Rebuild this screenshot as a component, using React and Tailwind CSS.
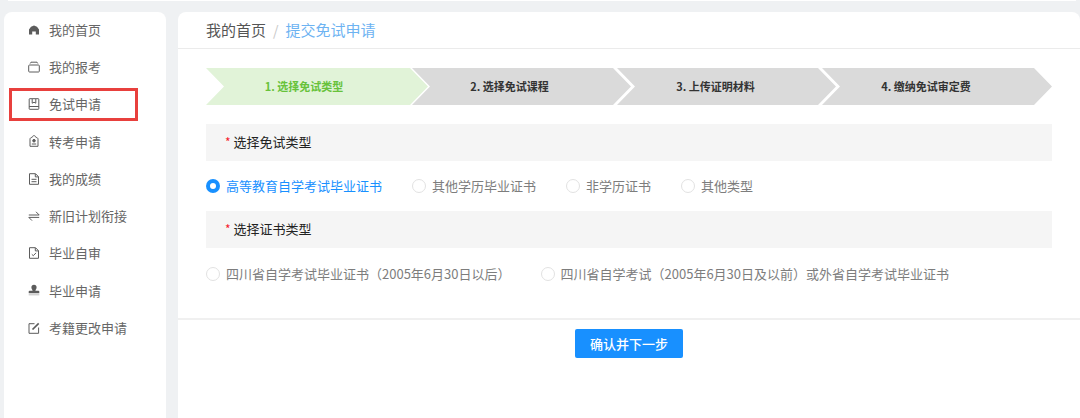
import React from "react";

const font = { fontFamily: '"Noto Sans CJK SC", "Noto Sans", sans-serif' };

// sidebar icons, drawn on a 12 box
const icons = {
  home: <path d="M6 1.500 3 2.700 1 5.500V10.500h3.200V7.500h3.600v3H11V5.500L9 2.700z" fill="currentColor" />,
  box: (
    <g fill="none" stroke="currentColor" strokeWidth="1">
      <rect x="0.700" y="4" width="10.600" height="7" rx="0.800" />
      <path d="M2.200 2.500 3 1.200h6l.8 1.300" />
    </g>
  ),
  form: (
    <g fill="none" stroke="currentColor" strokeWidth="1">
      <rect x="1.200" y="0.700" width="9.600" height="10.600" rx="0.500" />
      <path d="M4.200 1v4.200L6 4.200l1.800 1V1M1.200 8.500h9.600" />
    </g>
  ),
  badge: (
    <g fill="none" stroke="currentColor" strokeWidth="1">
      <path d="M2 4.200C2 3 3 2.500 4 2.500 4.300 1.300 5 .7 6 .7s1.700.6 2 1.800c1 0 2 .5 2 1.700v7.100H2z" />
      <circle cx="6" cy="5.700" r="1.300" fill="currentColor" />
      <path d="M3.800 9h4.400" />
    </g>
  ),
  file: (
    <g fill="none" stroke="currentColor" strokeWidth="1">
      <path d="M1.500.7h6L10.500 3.700v7.600h-9z" />
      <path d="M7.300 .9v3h3M3.500 6.300h5M3.500 8.700h5" />
    </g>
  ),
  swap: (
    <g fill="none" stroke="currentColor" strokeWidth="1">
      <path d="M.8 5h10.400L8 1.800M11.200 7.400H.8L4 10.600" />
    </g>
  ),
  check: (
    <g fill="none" stroke="currentColor" strokeWidth="1">
      <path d="M1.500.7h6L10.500 3.700v7.600h-9z" />
      <path d="M7.300.9v3h3M3.800 7.300l1.500 1.400 2.700-2.800" />
    </g>
  ),
  stamp: (
    <g fill="currentColor">
      <path d="M6 .8a2.600 2.600 0 0 1 2.600 2.600c0 1.400-1.100 2-1.200 3.300h3c.5 0 .9.400.9.900V9.300H.7V7.600c0-.5.4-.9.900-.9h3C4.500 5.400 3.400 4.800 3.400 3.400A2.600 2.600 0 0 1 6 .8z" />
      <rect x="0.700" y="10.300" width="10.600" height="1" opacity="0.4" />
    </g>
  ),
  edit: (
    <g fill="none" stroke="currentColor">
      <path d="M6.500 1.700H1v9.600h9.600V5.500" strokeWidth="1" />
      <path d="M4.500 7.500 10.700 1.300" strokeWidth="1.700" />
    </g>
  ),
};

const menu = [
  ["home", "我的首页"],
  ["box", "我的报考"],
  ["form", "免试申请"],
  ["badge", "转考申请"],
  ["file", "我的成绩"],
  ["swap", "新旧计划衔接"],
  ["check", "毕业自审"],
  ["stamp", "毕业申请"],
  ["edit", "考籍更改申请"],
];

function Radio({ label, checked }) {
  return (
    <div className="flex items-center">
      {checked ? (
        <span className="w-[14px] h-[14px] rounded-full bg-[#1890ff] flex items-center justify-center">
          <span className="w-[6px] h-[6px] rounded-full bg-white" />
        </span>
      ) : (
        <span className="w-[14px] h-[14px] rounded-full border border-[#e2e2e2] bg-white" />
      )}
      <span className={`ml-[6px] text-[13px] leading-5 whitespace-pre ${checked ? "text-[#1890ff]" : "text-[#7d7d7d]"}`}>{label}</span>
    </div>
  );
}

function SectionTitle({ children }) {
  return (
    <div className="h-[37px] bg-[#f5f5f5] flex items-center pl-[19px] pb-[2px] text-[13px] text-[#222]">
      <span className="text-[#f5222d] mr-[3px] text-[12px]">*</span>
      {children}
    </div>
  );
}

export default function App() {
  return (
    <div style={font} className="h-[418px] overflow-hidden bg-[#eff1f3]">
      <div className="h-px ml-2 mr-1 bg-white" />
      <div className="flex h-[417px] pt-[11px] pl-1 gap-3">
        <aside className="relative w-[162px] bg-white rounded-t-lg">
          {menu.map(([icon, name]) => (
            <div key={name} className="h-[37.25px] flex items-center pl-6 pb-[2px] text-[13px] text-[#666]">
              <svg width="12" height="12" viewBox="0 0 12 12" className="text-[#5c5c5c]">
                {icons[icon]}
              </svg>
              <span className="ml-[9px]">{name}</span>
            </div>
          ))}
          <div className="absolute left-[5px] top-[76px] w-[129px] h-[33px] border-[3px] border-[#e8403d]" />
        </aside>

        <main className="flex-1 bg-white rounded-t-lg">
          <div className="h-[37px] border-b border-[#ebebeb] flex items-center pl-7 text-[15px]">
            <span className="text-[#555]">我的首页</span>
            <span className="mx-[7px] text-[#c8c8c8] text-[14px]">/</span>
            <span className="text-[#6db3f2]">提交免试申请</span>
          </div>

          <div className="px-7 pt-[19px]">
            <div className="flex text-[11px] font-bold text-[#333]">
              <div className="w-[222px] h-[37px] flex items-center justify-center pr-[26px] bg-[#e1f3d8] text-[#67c23a] [clip-path:polygon(0_0,calc(100%-18px)_0,100%_50%,calc(100%-18px)_100%,0_100%,18px_50%)]">
                1. 选择免试类型
              </div>
              <div className="w-[219px] -ml-4 h-[37px] flex items-center justify-center pr-[24px] bg-[#dadada] [clip-path:polygon(0_0,calc(100%-18px)_0,100%_50%,calc(100%-18px)_100%,0_100%,18px_50%)]">
                2. 选择免试课程
              </div>
              <div className="w-[219px] -ml-[14px] h-[37px] flex items-center justify-center pr-[22px] bg-[#dadada] [clip-path:polygon(0_0,calc(100%-18px)_0,100%_50%,calc(100%-18px)_100%,0_100%,18px_50%)]">
                3. 上传证明材料
              </div>
              <div className="w-[230px] -ml-[14px] h-[37px] flex items-center justify-center pr-[22px] bg-[#dadada] [clip-path:polygon(0_0,calc(100%-18px)_0,100%_50%,calc(100%-18px)_100%,0_100%,18px_50%)]">
                4. 缴纳免试审定费
              </div>
            </div>

            <div className="w-[846px] mt-[19px]">
              <SectionTitle>选择免试类型</SectionTitle>
              <div className="h-[50px] flex items-center gap-[30px]">
                <Radio checked label="高等教育自学考试毕业证书" />
                <Radio label="其他学历毕业证书" />
                <Radio label="非学历证书" />
                <Radio label="其他类型" />
              </div>
              <SectionTitle>选择证书类型</SectionTitle>
              <div className="h-[52px] flex items-center gap-[30px]">
                <Radio label="四川省自学考试毕业证书（2005年6月30日以后）" />
                <Radio label="四川省自学考试（2005年6月30日及以前）或外省自学考试毕业证书" />
              </div>
            </div>
          </div>

          <div className="mt-[18px] border-t-2 border-[#f0f0f0] pt-[9px] flex justify-center">
            <button className="w-[108px] h-[29px] rounded-[2px] bg-[#1890ff] text-white text-[13px] font-medium">
              确认并下一步
            </button>
          </div>
        </main>
      </div>
    </div>
  );
}
